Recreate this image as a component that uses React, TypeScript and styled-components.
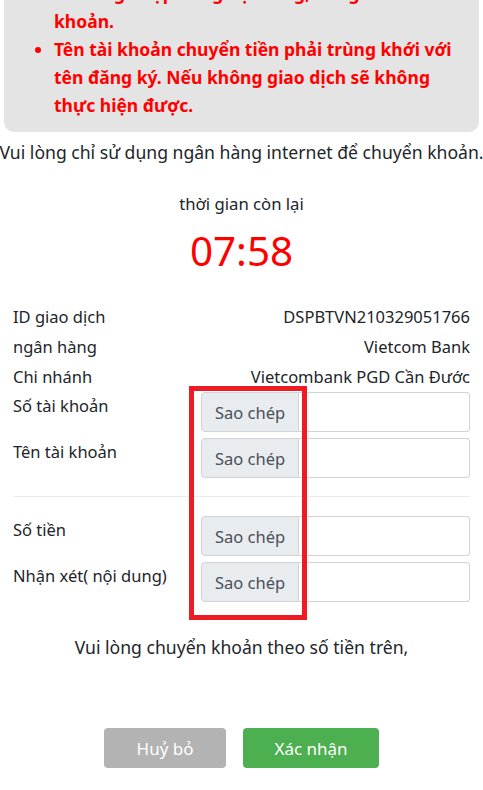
import React from "react";
import styled, { createGlobalStyle } from "styled-components";

const GlobalStyle = createGlobalStyle`
  html, body {
    margin: 0;
    padding: 0;
    background: #fff;
    overflow: hidden;
  }
  body {
    font-family: "Noto Sans", "Open Sans", sans-serif;
    color: #212529;
  }
`;

const Page = styled.div`
  width: 483px;
  height: 790px;
  overflow: hidden;
`;

// the page is scrolled: the first line of the notice sits above the fold
const Notice = styled.div`
  margin: -29px 4px 0;
  padding: 8px 0 13px;
  background: #e4e4e4;
  border-radius: 0 0 10px 10px;

  ul {
    margin: 0;
    padding: 0 14px 0 50px;
  }

  li {
    color: #ff0000;
    font-weight: 700;
    font-size: 17.5px;
    line-height: 28px;
  }
`;

const Hint = styled.p<{ $top: number }>`
  margin: ${({ $top }) => $top}px -10px 0;
  text-align: center;
  font-size: 17.6px;
  line-height: 26px;
  white-space: nowrap;
`;

const Countdown = styled.div`
  margin-top: 27px;
  text-align: center;

  .label {
    font-size: 16.7px;
    line-height: 24px;
  }

  .time {
    margin-top: 9px;
    color: #ff0000;
    font-size: 40.4px;
    line-height: 52px;
  }
`;

const Details = styled.div`
  position: relative;
  margin-top: 25px;
  padding: 0 13px;
`;

const InfoRow = styled.div`
  display: flex;
  justify-content: space-between;
  font-size: 16.5px;
  line-height: 30px;
`;

const FieldRow = styled.div<{ $gap: number }>`
  display: grid;
  grid-template-columns: 188px 1fr;
  margin-top: ${({ $gap }) => $gap}px;
  font-size: 16.5px;

  label {
    line-height: 26px;
    padding-top: 1px;
  }
`;

const InputGroup = styled.div`
  display: flex;
  height: 40px;

  span {
    display: flex;
    align-items: center;
    padding: 0 13px;
    background: #e9ecef;
    border: 1px solid #ced4da;
    border-radius: 4px 0 0 4px;
    color: #495057;
    font-size: 16.5px;
  }

  input {
    flex: 1;
    min-width: 0;
    border: 1px solid #ced4da;
    border-left: none;
    border-radius: 0 4px 4px 0;
    background: #fff;
    outline: none;
  }
`;

const Divider = styled.hr`
  margin: 18px 0 0;
  border: none;
  border-top: 1px solid #ececec;
`;

// annotation frame drawn over the copy buttons
const Highlight = styled.div`
  position: absolute;
  left: 189px;
  top: 84px;
  width: 118px;
  height: 234px;
  box-sizing: border-box;
  border: 5px solid #ed1c24;
  pointer-events: none;
`;

const Actions = styled.div`
  display: flex;
  justify-content: center;
  gap: 17px;
  margin-top: 68px;
`;

const Button = styled.button<{ $variant: "cancel" | "confirm" }>`
  height: 40px;
  width: ${({ $variant }) => ($variant === "cancel" ? 122 : 136)}px;
  border: none;
  border-radius: 4px;
  font-family: inherit;
  font-size: 17px;
  color: #fff;
  background: ${({ $variant }) => ($variant === "cancel" ? "#b3b3b3" : "#4caf50")};
`;

const fields = [
  { label: "Số tài khoản", gap: 0 },
  { label: "Tên tài khoản", gap: 6 },
];

const moneyFields = [
  { label: "Số tiền", gap: 19 },
  { label: "Nhận xét( nội dung)", gap: 6 },
];

const Field: React.FC<{ label: string; gap: number }> = ({ label, gap }) => (
  <FieldRow $gap={gap}>
    <label>{label}</label>
    <InputGroup>
      <span>Sao chép</span>
      <input readOnly />
    </InputGroup>
  </FieldRow>
);

export default function App() {
  return (
    <Page>
      <GlobalStyle />
      <Notice>
        <ul>
          <li>
            Vui lòng nhập đúng nội dung, đúng số tài
            <br />
            khoản.
          </li>
          <li>
            Tên tài khoản chuyển tiền phải trùng khới với tên đăng ký. Nếu không
            giao dịch sẽ không thực hiện được.
          </li>
        </ul>
      </Notice>
      <Hint $top={7}>Vui lòng chỉ sử dụng ngân hàng internet để chuyển khoản.</Hint>
      <Countdown>
        <div className="label">thời gian còn lại</div>
        <div className="time">07:58</div>
      </Countdown>
      <Details>
        <InfoRow>
          <span>ID giao dịch</span>
          <span>DSPBTVN210329051766</span>
        </InfoRow>
        <InfoRow>
          <span>ngân hàng</span>
          <span>Vietcom Bank</span>
        </InfoRow>
        <InfoRow>
          <span>Chi nhánh</span>
          <span>Vietcombank PGD Cần Đước</span>
        </InfoRow>
        {fields.map((f) => (
          <Field key={f.label} {...f} />
        ))}
        <Divider />
        {moneyFields.map((f) => (
          <Field key={f.label} {...f} />
        ))}
        <Highlight />
      </Details>
      <Hint $top={32}>Vui lòng chuyển khoản theo số tiền trên,</Hint>
      <Actions>
        <Button $variant="cancel">Huỷ bỏ</Button>
        <Button $variant="confirm">Xác nhận</Button>
      </Actions>
    </Page>
  );
}
